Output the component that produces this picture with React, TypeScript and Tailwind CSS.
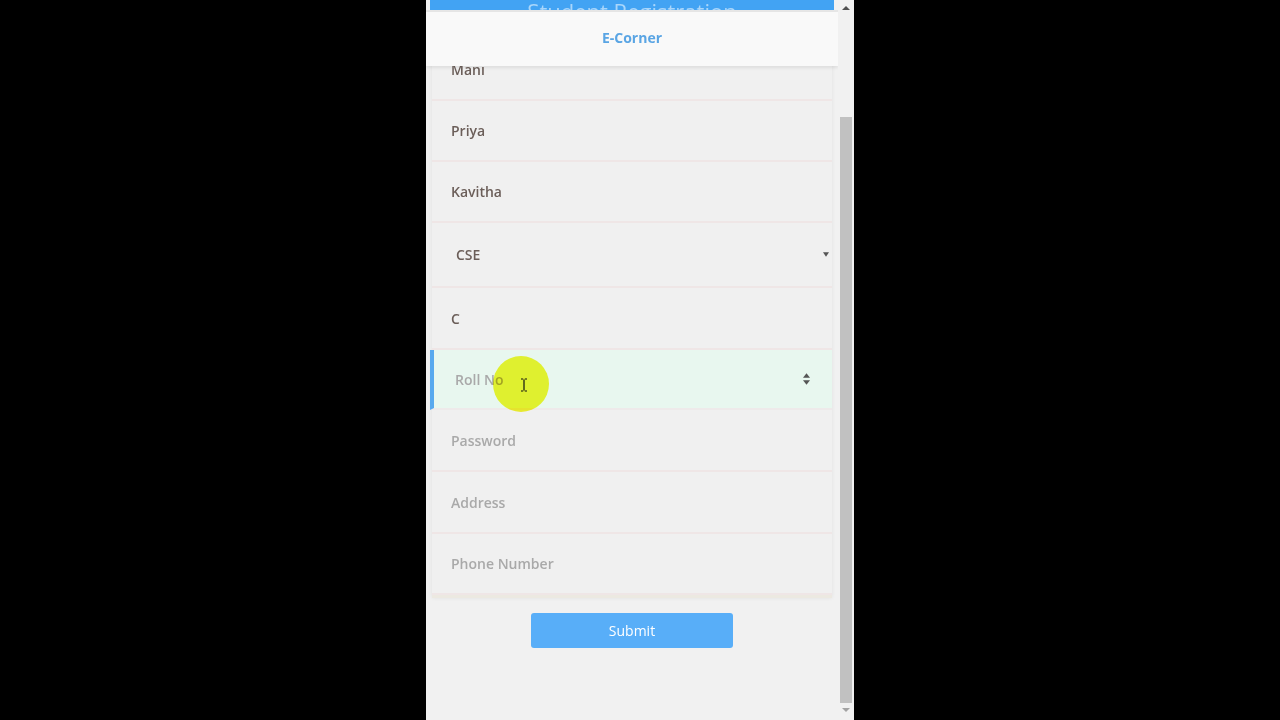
import * as React from "react";

type Field = { label: string; value?: string; kind?: "text" | "select" | "number"; focused?: boolean; h: string };

const fields: Field[] = [
  { label: "Priya", value: "Priya", h: "h-[61px]" },
  { label: "Kavitha", value: "Kavitha", h: "h-[61px]" },
  { label: "Department", value: "CSE", kind: "select", h: "h-[65px]" },
  { label: "Section", value: "C", h: "h-[62px]" },
  { label: "Roll No", kind: "number", focused: true, h: "h-[60px]" },
  { label: "Password", h: "h-[62px]" },
  { label: "Address", h: "h-[62px]" },
  { label: "Phone Number", h: "h-[61px]" },
];

function Row({ f }: { f: Field }) {
  if (f.focused) {
    return (
      <div className={`relative -ml-[2px] flex items-center border-l-[4px] border-[#58a9ee] bg-[#e8f7ef] pl-[21px] pr-[22px] ${f.h} border-b-2 border-b-[#eeeaea]`}>
        <span className="text-[14px] font-semibold text-[#a9a9a9]">{f.label}</span>
        <span className="ml-auto flex flex-col items-center leading-none text-[#555]">
          <svg viewBox="0 0 8 5" className="h-[5px] w-[7px]"><path d="M4 0 8 5H0z" fill="currentColor" /></svg>
          <svg viewBox="0 0 8 5" className="mt-[2px] h-[5px] w-[7px]"><path d="M0 0h8L4 5z" fill="currentColor" /></svg>
        </span>
      </div>
    );
  }
  const hasValue = !!f.value;
  return (
    <div className={`flex items-center border-b-2 border-[#efe6e6] bg-[#f0f0f0] ${f.kind === "select" ? "pl-[24px] pr-[3px]" : "pl-[19px] pr-[20px]"} ${f.h}`}>
      <span className={`text-[14px] font-semibold ${hasValue ? "text-[#6b5e59]" : "text-[#a9a9a9]"}`}>
        {f.value ?? f.label}
      </span>
      {f.kind === "select" && (
        <svg viewBox="0 0 8 6" className="ml-auto h-[5px] w-[6px] text-[#555]"><path d="M0 0h8L4 6z" fill="currentColor" /></svg>
      )}
    </div>
  );
}

export default function App() {
  return (
    <div className="flex h-[720px] w-full justify-center overflow-hidden bg-black" style={{ fontFamily: '"Open Sans", "Liberation Sans", sans-serif' }}>
      <div className="relative flex h-[720px] w-[428px] bg-[#f1f1f1]">
        {/* page */}
        <div className="flex w-[412px] flex-col overflow-hidden">
          {/* title bar, mostly scrolled away */}
          <div className="mx-[4px] h-[10px] overflow-hidden bg-[#42a3f3]">
            <div className="-mt-[4px] text-center text-[22px] leading-[30px] text-[#a9d6fb]">Student Registration</div>
          </div>
          <div className="h-[2px] bg-[#e6e6e6]" />
          {/* sticky header */}
          <div className="relative z-10 flex h-[54px] shrink-0 items-center justify-center bg-[#f9f9f9] pb-[3px] shadow-[0_2px_3px_rgba(0,0,0,0.08)]">
            <span className="text-[14px] font-bold text-[#5aa5e4]">E-Corner</span>
          </div>
          {/* form */}
          <div className="px-[6px]">
            <div className="-mt-[27px] shadow-[0_3px_4px_rgba(0,0,0,0.07)]">
              <div className="flex h-[62px] items-center border-b-2 border-[#efe6e6] bg-[#f0f0f0] pl-[19px]">
                <span className="text-[14px] font-semibold text-[#6b5e59]">Mani</span>
              </div>
              {fields.map((f) => (
                <Row key={f.label} f={f} />
              ))}
            </div>
            <div className="h-[3px] bg-[#ece9e1]" />
            <div className="flex justify-center pt-[15px]">
              <button className="h-[35px] w-[202px] rounded-[3px] bg-[#58aef8] text-[14px] text-white">Submit</button>
            </div>
          </div>
        </div>
        {/* scrollbar */}
        <div className="flex w-[16px] flex-col items-center bg-[#f1f1f1]">
          <svg viewBox="0 0 8 4" className="mt-[6px] h-[4px] w-[8px] text-[#505050]"><path d="M4 0 8 4H0z" fill="currentColor" /></svg>
          <div className="mt-[107px] h-[586px] w-[12px] bg-[#c1c1c1]" />
          <svg viewBox="0 0 8 4" className="mt-[5px] h-[4px] w-[8px] text-[#a3a3a3]"><path d="M0 0h8L4 4z" fill="currentColor" /></svg>
        </div>
        {/* recorder cursor highlight */}
        <div className="pointer-events-none absolute left-[67px] top-[356px] z-20 h-[56px] w-[56px] rounded-full bg-[#f6f832] mix-blend-multiply" />
        <svg viewBox="0 0 8 14" className="pointer-events-none absolute left-[94px] top-[378px] z-30 h-[14px] w-[8px]">
          <path d="M1 1h2.2M4.8 1H7M4 1.5v11M1 13h2.2M4.8 13H7" stroke="#111" strokeWidth="1.2" fill="none" />
        </svg>
      </div>
    </div>
  );
}
